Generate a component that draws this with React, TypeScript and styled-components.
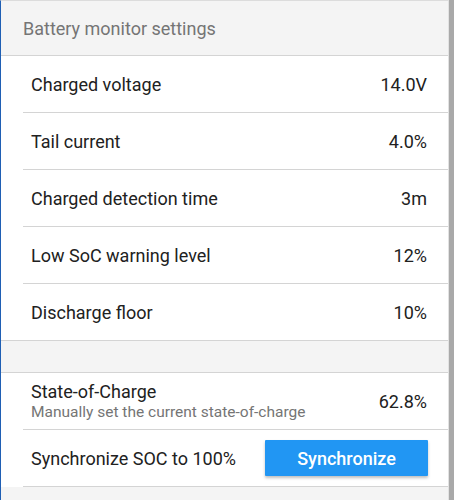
import React from "react";
import styled, { createGlobalStyle } from "styled-components";

const GlobalStyle = createGlobalStyle`
  html, body {
    margin: 0;
    padding: 0;
    background: #f4f4f4;
  }
  body {
    font-family: Roboto, "Noto Sans", sans-serif;
    -webkit-font-smoothing: antialiased;
  }
`;

type Setting = { label: string; value: string };

const settings: Setting[] = [
  { label: "Charged voltage", value: "14.0V" },
  { label: "Tail current", value: "4.0%" },
  { label: "Charged detection time", value: "3m" },
  { label: "Low SoC warning level", value: "12%" },
  { label: "Discharge floor", value: "10%" },
];

export default function App() {
  return (
    <>
      <GlobalStyle />
      <Window>
        <Panel>
          <Header>Battery monitor settings</Header>
          <List>
            {settings.map((s, i) => (
              <Row key={s.label} $last={i === settings.length - 1}>
                <Label>{s.label}</Label>
                <Value>{s.value}</Value>
              </Row>
            ))}
          </List>
          <Spacer />
          <List>
            <Row>
              <LabelBlock>
                <Label>State-of-Charge</Label>
                <Caption>Manually set the current state-of-charge</Caption>
              </LabelBlock>
              <Value>62.8%</Value>
            </Row>
            <Row>
              <Label>Synchronize SOC to 100%</Label>
              <ActionButton>Synchronize</ActionButton>
            </Row>
          </List>
          <Footer />
        </Panel>
        <ScrollStrip />
      </Window>
    </>
  );
}

const Window = styled.div`
  display: flex;
  width: 454px;
  height: 500px;
  overflow: hidden;
`;

const Panel = styled.div`
  flex: 1;
  display: flex;
  flex-direction: column;
  border-left: 1px solid #1f5fb4;
  border-top: 1px solid #dcdcdc;
  border-right: 1px solid #e2e2e2;
  background: #f4f4f4;
`;

const ScrollStrip = styled.div`
  width: 5px;
  background: #a9a9a9;
`;

const Header = styled.div`
  height: 54px;
  display: flex;
  align-items: center;
  padding-left: 22px;
  font-size: 18px;
  color: #757575;
  background: #f4f4f4;
  border-bottom: 1px solid #d4d4d4;
`;

const List = styled.div`
  background: #ffffff;
  display: flex;
  flex-direction: column;
`;

const Row = styled.div<{ $last?: boolean }>`
  height: 56px;
  display: flex;
  align-items: center;
  justify-content: space-between;
  margin-left: ${(p) => (p.$last ? "0" : "22px")};
  padding: 0 21px 0 ${(p) => (p.$last ? "30px" : "8px")};
  border-bottom: 1px solid #d4d4d4;
`;

const Label = styled.div`
  font-size: 18px;
  color: #212121;
`;

const LabelBlock = styled.div`
  display: flex;
  flex-direction: column;
  gap: 1px;
`;

const Caption = styled.div`
  font-size: 15.5px;
  color: #757575;
`;

const Value = styled.div`
  font-size: 18px;
  color: #212121;
`;

const Spacer = styled.div`
  height: 31px;
  background: #f4f4f4;
  border-bottom: 1px solid #d4d4d4;
`;

const ActionButton = styled.button`
  width: 163px;
  height: 36px;
  margin-right: -1px;
  border: none;
  border-radius: 1px;
  background: #2196f3;
  color: #ffffff;
  font-family: Roboto, sans-serif;
  font-size: 18px;
  font-weight: 500;
  box-shadow: 0 2px 3px rgba(0, 0, 0, 0.25);
  cursor: pointer;
`;

const Footer = styled.div`
  flex: 1;
  background: #f4f4f4;
`;
